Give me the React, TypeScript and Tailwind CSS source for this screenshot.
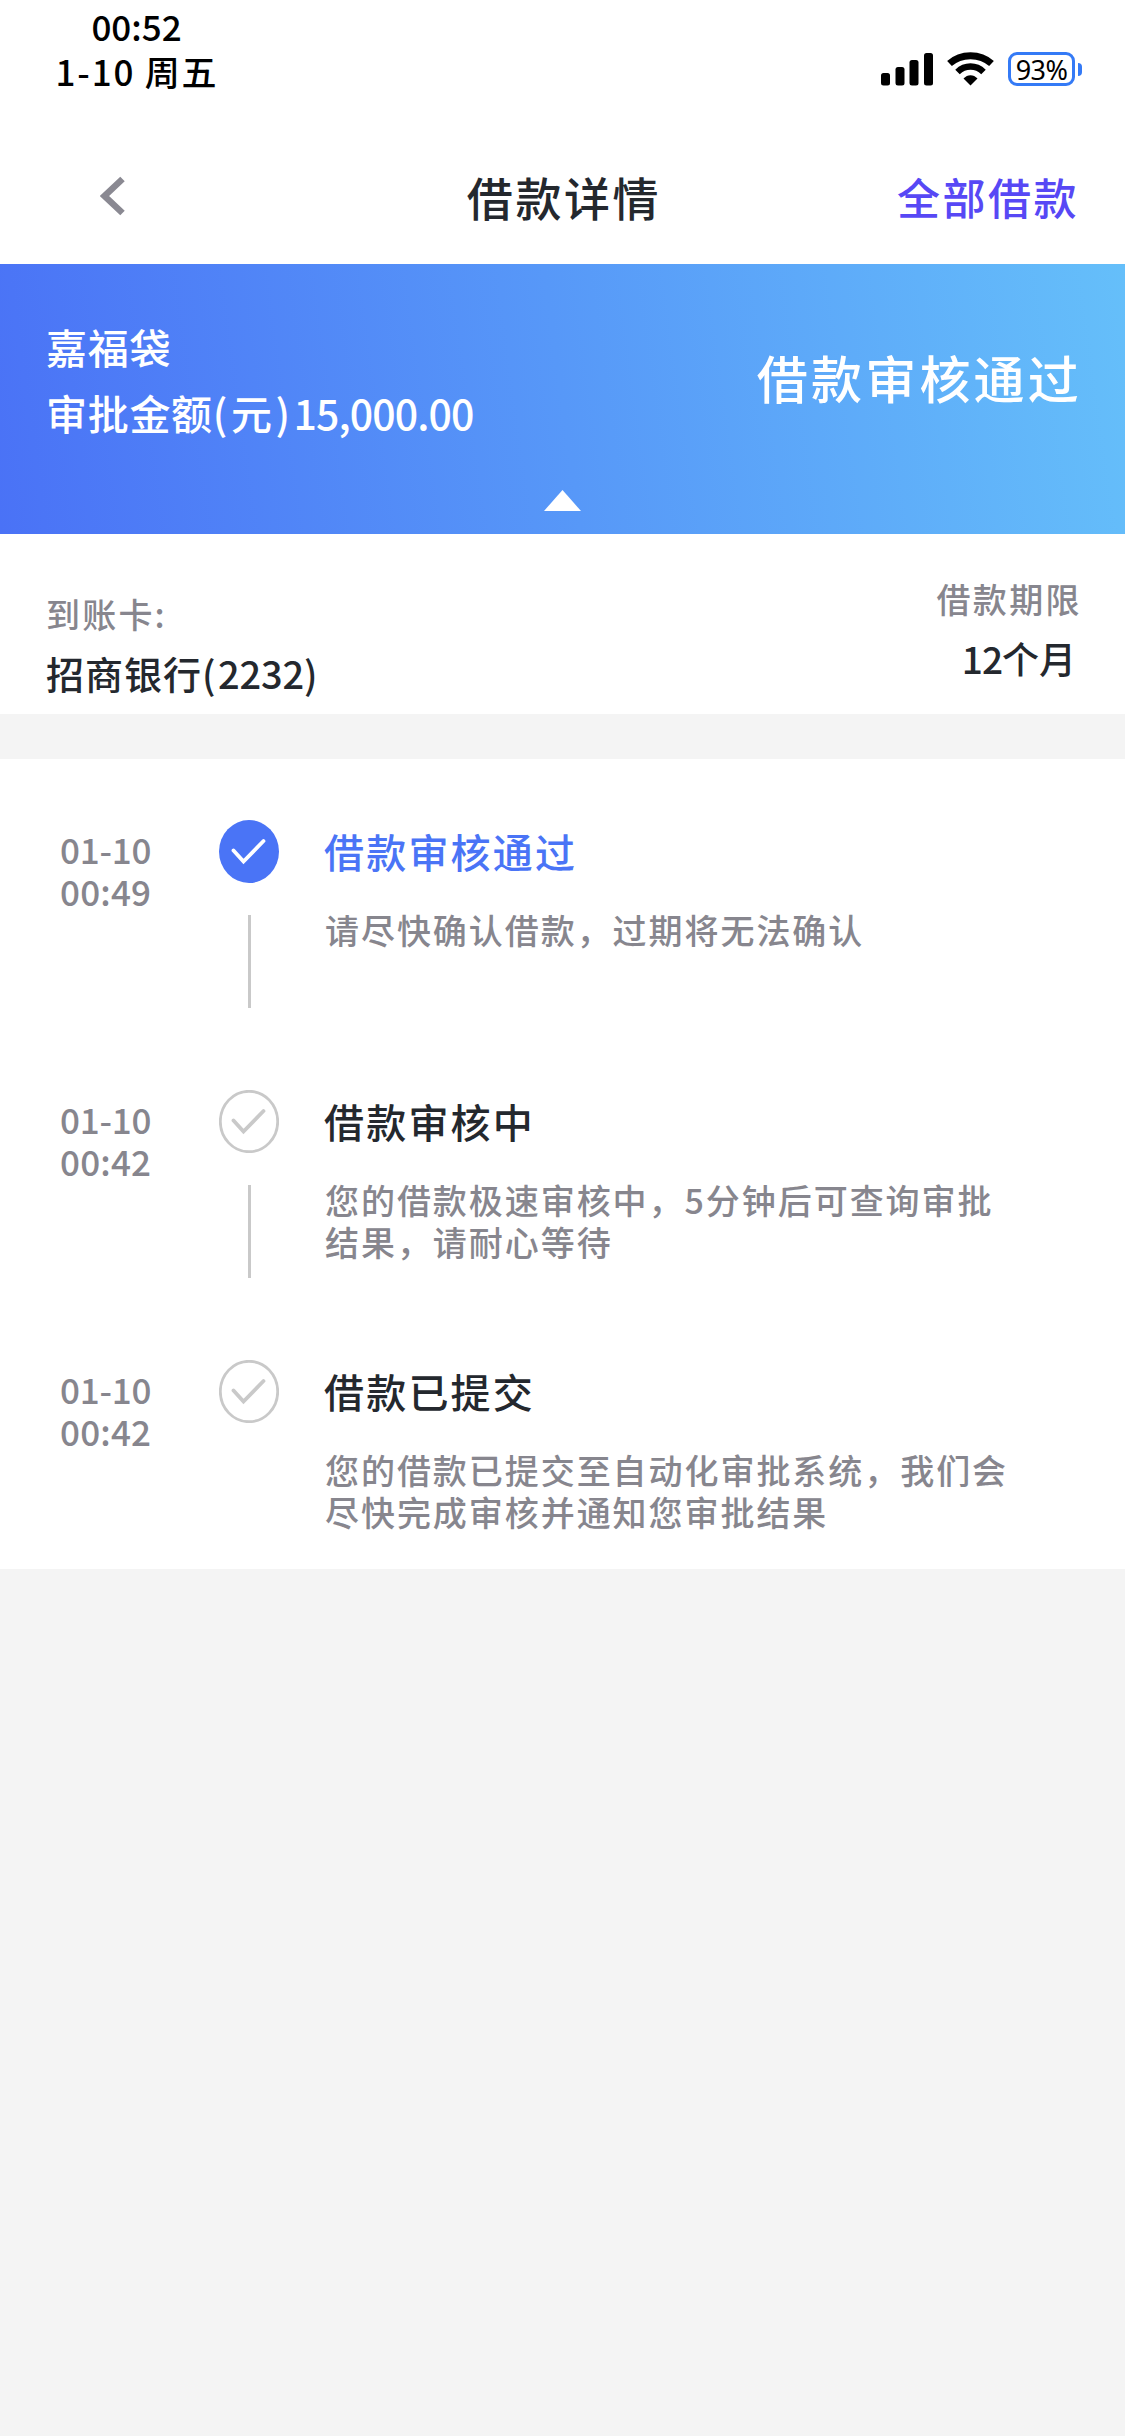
interface Step {
  date: string;
  time: string;
  title: string;
  lines: string[];
  active?: boolean;
}

const steps: Step[] = [
  {
    date: '01-10',
    time: '00:49',
    title: '借款审核通过',
    lines: ['请尽快确认借款，过期将无法确认'],
    active: true,
  },
  {
    date: '01-10',
    time: '00:42',
    title: '借款审核中',
    lines: ['您的借款极速审核中，5分钟后可查询审批', '结果，请耐心等待'],
  },
  {
    date: '01-10',
    time: '00:42',
    title: '借款已提交',
    lines: ['您的借款已提交至自动化审批系统，我们会', '尽快完成审核并通知您审批结果'],
  },
];

function StatusBar() {
  return (
    <div className="flex h-[132px] items-start justify-between pl-[56px] pr-[43px] text-black">
      <div className="flex w-[162px] flex-col items-center whitespace-nowrap pt-[3px] text-[35px] leading-[45px]">
        <p className="pr-px">00:52</p>
        <p className="tracking-[1.800px]">1-10 周五</p>
      </div>
      <div className="flex items-center pt-[52px]">
        <svg width="52" height="34" viewBox="0 0 52 34" fill="currentColor">
          <rect x="0" y="21" width="9" height="12.500" rx="2.500" />
          <rect x="14.500" y="15" width="9" height="18.500" rx="2.500" />
          <rect x="28.500" y="8" width="9" height="25.500" rx="2.500" />
          <rect x="43" y="1" width="9" height="32.500" rx="2.500" />
        </svg>
        <svg className="ml-[14px]" width="47" height="34" viewBox="0 0 47 34" fill="none" stroke="currentColor">
          <path d="M2.500 11.500 C14 1, 33 1, 44.500 11.500" strokeWidth="7" />
          <path d="M10.500 20 C18 12.800, 29 12.800, 36.500 20" strokeWidth="6.500" />
          <path d="M16.500 26.500 C20.500 22, 26.500 22, 30.500 26.500 L23.500 33.500 Z" fill="currentColor" stroke="none" />
        </svg>
        <div className="ml-[14px] flex h-[34px] w-[67px] items-center justify-center rounded-[9px] border-[3px] border-[#347af6] font-['Noto_Sans',sans-serif] text-[27px] font-normal leading-none tracking-[-0.600px]">
          93%
        </div>
        <div className="ml-[3px] h-[13px] w-[4px] rounded-r-full bg-[#347af6]" />
      </div>
    </div>
  );
}

function NavBar() {
  return (
    <div className="grid h-[132px] grid-cols-3 items-center pb-[5px] pl-[100px] pr-[46px]">
      <svg width="26" height="40" viewBox="0 0 26 40" fill="none" stroke="#8a8992" strokeWidth="6.500">
        <path d="M22.500 3 L4.500 20 L22.500 37" />
      </svg>
      <h1 className="-ml-[51px] whitespace-nowrap text-center text-[46px] leading-[60px] tracking-[2.600px] text-[#24282e]">
        借款详情
      </h1>
      <span className="text-right text-[43px] leading-[60px] tracking-[2.500px] text-[#5748f5]">全部借款</span>
    </div>
  );
}

function Summary() {
  return (
    <div className="h-[270px] bg-[linear-gradient(82deg,#4a72f6_0%,#5798f8_50%,#65bffa_100%)] px-[46px] pt-[49px] text-white">
      <div className="flex h-[132px] items-center justify-between">
        <div className="text-[41px] leading-[66px] tracking-[0.700px]">
          <p>嘉福袋</p>
          <p>
            审批金额<span className="tracking-[3.500px]">(元)</span>
            <span className="tracking-[-0.900px]">15,000.00</span>
          </p>
        </div>
        <p className="-mr-[3px] pb-[5px] text-[51px] leading-[66px] tracking-[3.200px]">借款审核通过</p>
      </div>
      <svg className="mx-auto mt-[45px]" width="37" height="21" viewBox="0 0 37 21" fill="white">
        <path d="M18.500 0 L37 21 H0 Z" />
      </svg>
    </div>
  );
}

function LoanInfo() {
  return (
    <div className="flex h-[180px] justify-between bg-white pl-[46px] pr-[43px] leading-[60px]">
      <div className="pt-[50px]">
        <p className="text-[34px] tracking-[2.200px] text-[#87868e]">到账卡:</p>
        <p className="-mt-px text-[38px] tracking-[1px] text-[#24282e]">
          招商银行<span className="tracking-[2.500px]">(</span>
          <span className="tracking-[-0.200px]">2232)</span>
        </p>
      </div>
      <div className="pt-[35px] text-right">
        <p className="text-[34px] tracking-[2.400px] text-[#87868e]">借款期限</p>
        <p className="-mt-px pr-[6px] text-[37px] text-[#24282e]">
          <span className="tracking-[-1px]">12</span>个月
        </p>
      </div>
    </div>
  );
}

function StepIcon({ active }: { active?: boolean }) {
  return (
    <svg width="60" height="63" viewBox="0 0 60 63" fill="none">
      {active ? (
        <ellipse cx="30" cy="31.500" rx="30" ry="31.500" fill="#4a74f6" />
      ) : (
        <ellipse cx="30" cy="31.500" rx="28.700" ry="30.200" stroke="#c9c9c9" strokeWidth="2.800" />
      )}
      <path
        d="M14.500 30.500 L24.500 41.500 L44.500 21"
        stroke={active ? '#fff' : '#c9c9c9'}
        strokeWidth="3.800"
        strokeLinecap="round"
      />
    </svg>
  );
}

function StepRow({ step, last }: { step: Step; last: boolean }) {
  return (
    <div className="flex h-[270px]">
      <div className="w-[219px] pl-[60px] pt-[69px] text-[35px] leading-[42px] text-[#87868e]">
        <p className="tracking-[-0.200px]">{step.date}</p>
        <p className="tracking-[0.200px]">{step.time}</p>
      </div>
      <div className="flex w-[60px] flex-col items-center pt-[61px]">
        <StepIcon active={step.active} />
        {!last && <div className="mt-[32px] h-[93px] w-[3px] bg-[#c9c9c9]" />}
      </div>
      <div className="whitespace-nowrap pl-[45px] pt-[67px]">
        <h2
          className={`text-[40px] leading-[50px] tracking-[2.200px] ${step.active ? 'text-[#4a74f6]' : 'text-[#24282e]'}`}
        >
          {step.title}
        </h2>
        <div className="mt-[33px] pl-px text-[34px] leading-[42px] tracking-[1.950px] text-[#87868e]">
          {step.lines.map((line) => (
            <p key={line}>{line}</p>
          ))}
        </div>
      </div>
    </div>
  );
}

export default function App() {
  return (
    <div className="min-h-[2436px] w-[1125px] bg-[#f4f4f4] font-['Noto_Sans_CJK_SC',sans-serif] font-medium">
      <div className="bg-white">
        <StatusBar />
        <NavBar />
      </div>
      <Summary />
      <LoanInfo />
      <div className="mt-[45px] bg-white">
        {steps.map((step, i) => (
          <StepRow key={step.title} step={step} last={i === steps.length - 1} />
        ))}
      </div>
    </div>
  );
}
